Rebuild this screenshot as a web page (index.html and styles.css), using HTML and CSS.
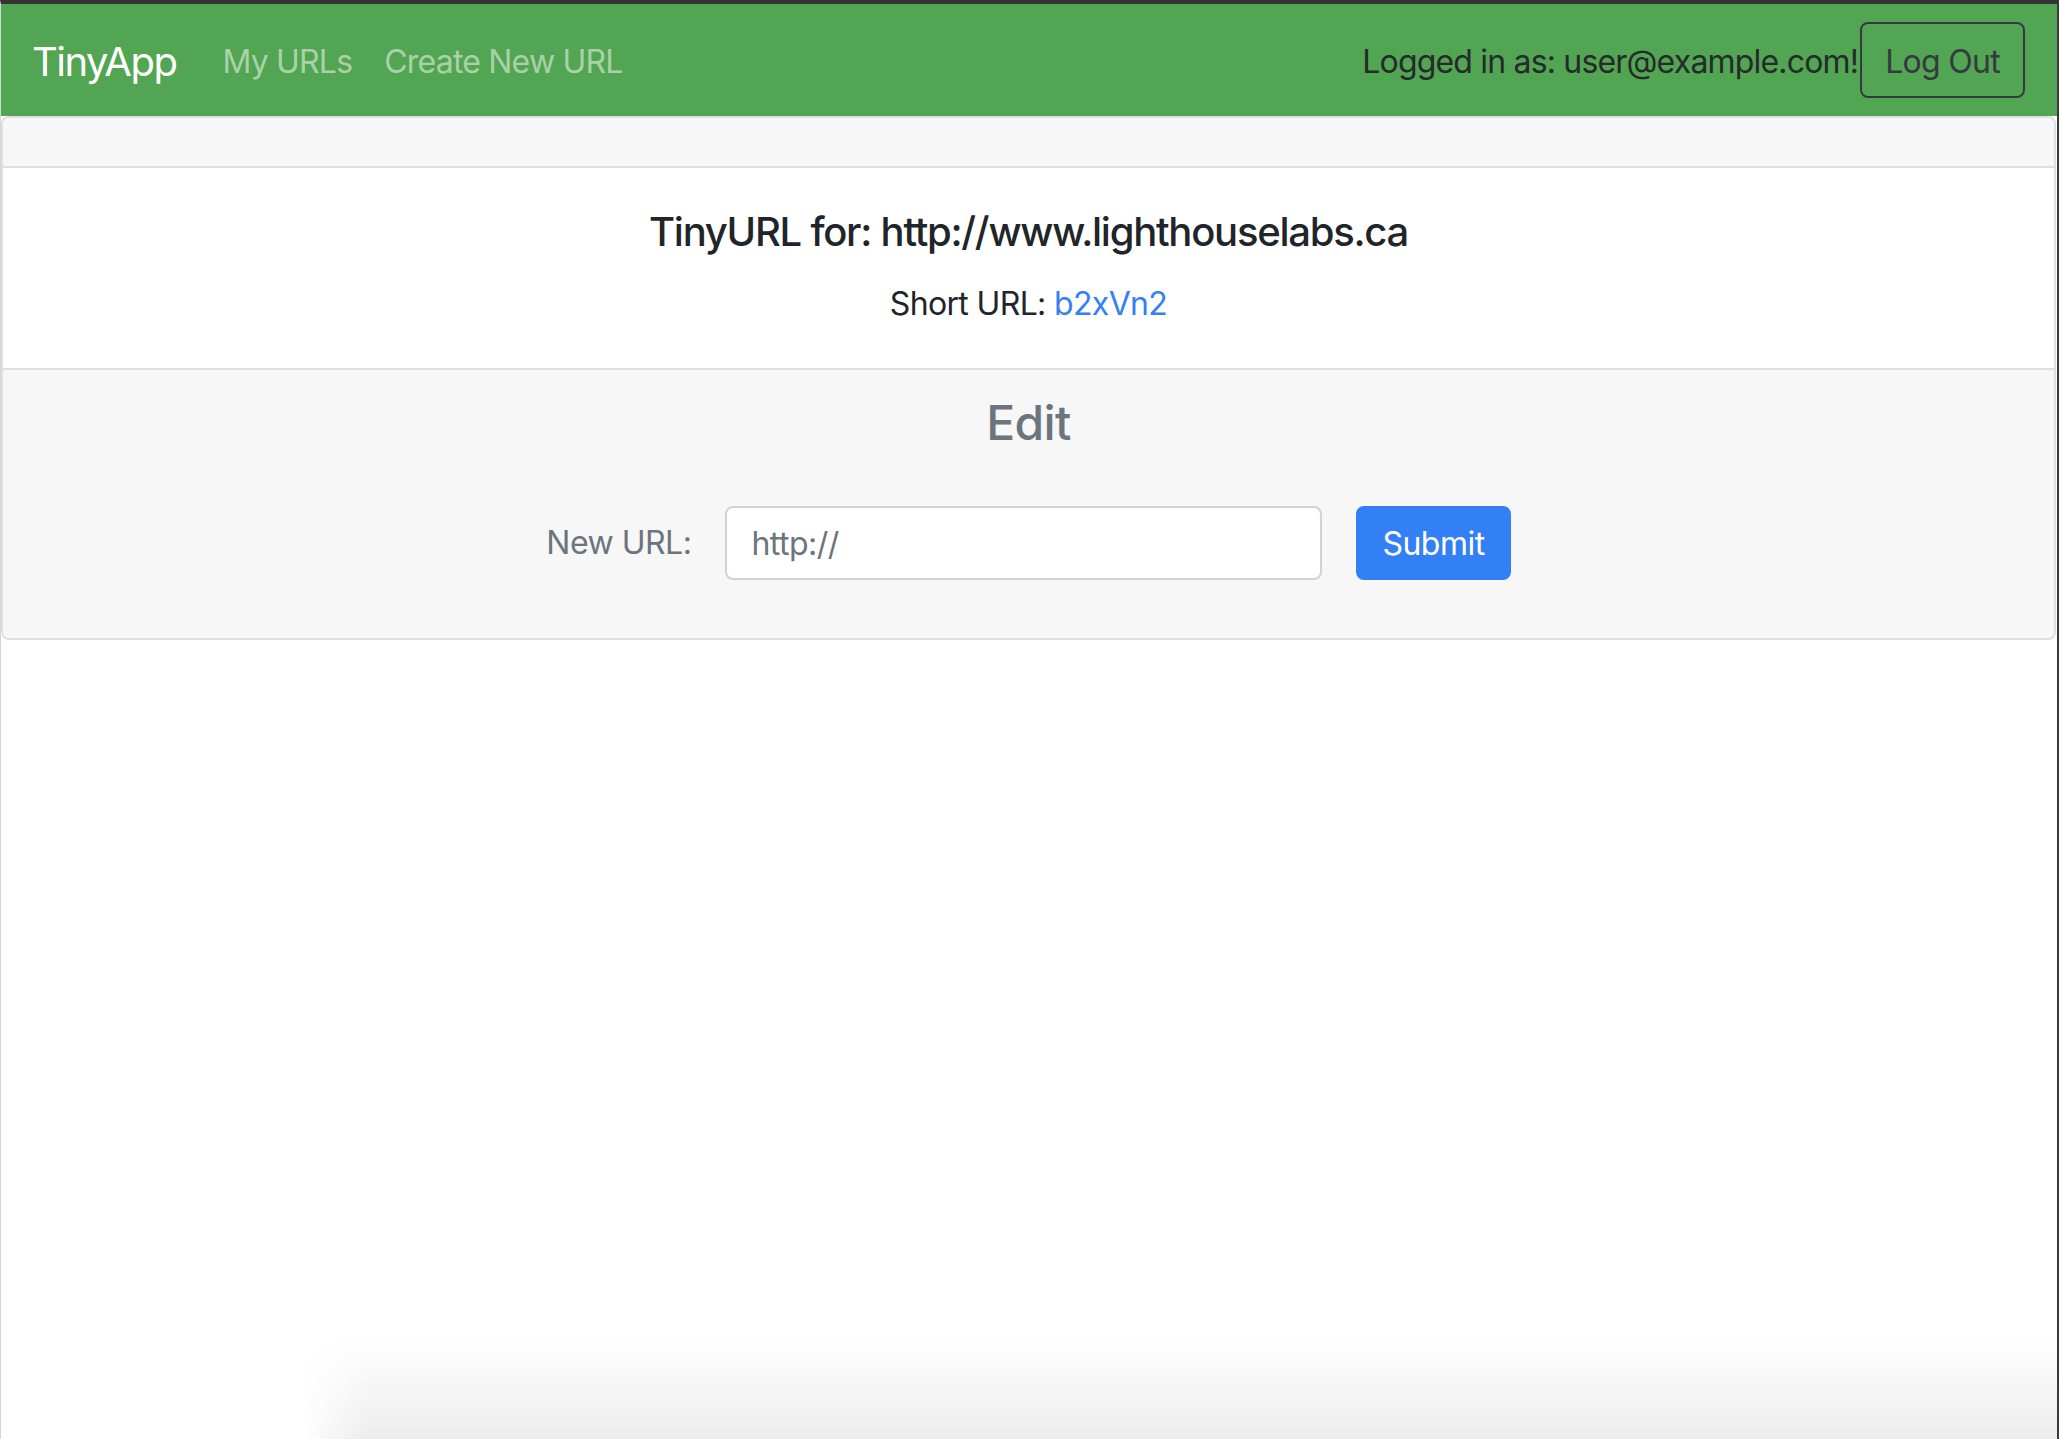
FILE: index.html
```html
<!DOCTYPE html>
<html lang="en">
<head>
<meta charset="utf-8">
<title>TinyApp</title>
<link rel="stylesheet" href="styles.css">
</head>
<body>
<div class="window">
  <nav class="navbar">
    <a class="brand" href="#">TinyApp</a>
    <ul class="nav-links">
      <li><a href="#">My URLs</a></li>
      <li><a href="#">Create New URL</a></li>
    </ul>
    <div class="user">
      <span class="user-text">Logged in as: user@example.com!</span>
      <button class="btn-logout" type="button">Log Out</button>
    </div>
  </nav>
  <main class="card">
    <div class="card-header"></div>
    <div class="card-body">
      <h5 class="card-title">TinyURL for: http://www.lighthouselabs.ca</h5>
      <p class="card-text">Short URL: <a class="short-link" href="#">b2xVn2</a></p>
    </div>
    <div class="card-footer">
      <h4 class="edit-title">Edit</h4>
      <form class="edit-form">
        <label class="edit-label" for="newurl">New URL:</label>
        <input class="edit-input" id="newurl" type="text" value="http://">
        <button class="btn-submit" type="button">Submit</button>
      </form>
    </div>
  </main>
  <div class="bottom-shade"></div>
</div>
</body>
</html>
```

FILE: styles.css
```css
* { box-sizing: border-box; }

html, body {
  margin: 0;
  padding: 0;
  background: #ffffff;
}

body {
  font-family: "Inter", "Liberation Sans", Arial, sans-serif;
  font-size: 32px;
  line-height: 1.5;
  color: #212529;
}

.window {
  position: relative;
  min-height: 100vh;
  border-top: 4px solid #333333;
  border-left: 1px solid #d6d6d6;
  border-right: 2px solid #3a3a3a;
  overflow: hidden;
}

.navbar {
  display: flex;
  align-items: center;
  height: 112px;
  padding: 16px 32px 16px 31px;
  background: #52a552;
}

.brand {
  font-size: 40px;
  line-height: 60px;
  padding: 12px 0 8px;
  margin-right: 30px;
  color: #ffffff;
  text-decoration: none;
  letter-spacing: -1.5px;
}

.nav-links {
  display: flex;
  list-style: none;
  margin: 0;
  padding: 0;
}

.nav-links a {
  display: block;
  padding: 18px 16px 14px;
  line-height: 48px;
  color: #a9d2a9;
  text-decoration: none;
  letter-spacing: -0.8px;
}

.user {
  margin-left: auto;
  display: flex;
  align-items: center;
}

.user-text {
  color: #262a2c;
  letter-spacing: -0.82px;
  padding-top: 3px;
}

.btn-logout {
  font: inherit;
  letter-spacing: -0.7px;
  color: #343a40;
  background: transparent;
  border: 2px solid #343a40;
  border-radius: 8px;
  padding: 13px 23px 9px;
  line-height: 48px;
  height: 76px;
  margin-left: 2px;
}

.card {
  display: flex;
  flex-direction: column;
  border: 2px solid #dfdfdf;
  border-radius: 8px;
  background: #ffffff;
  margin-right: 1px;
}

.card-header {
  height: 50px;
  background: #f7f7f7;
  border-bottom: 2px solid #dfdfdf;
  border-radius: 6px 6px 0 0;
}

.card-body {
  padding: 40px;
  text-align: center;
}

.card-title {
  margin: 0 0 24px;
  font-size: 40px;
  line-height: 48px;
  font-weight: 500;
  color: #212529;
  letter-spacing: -1.26px;
}

.card-text {
  margin: 0;
  line-height: 48px;
  letter-spacing: -0.65px;
}

.short-link {
  color: #3381f5;
  text-decoration: none;
}

.card-footer {
  background: #f7f7f7;
  border-top: 2px solid #dfdfdf;
  border-radius: 0 0 6px 6px;
  padding: 24px 40px 26px;
  text-align: center;
}

.edit-title {
  margin: 0 0 55px;
  font-size: 48px;
  line-height: 57px;
  font-weight: 500;
  color: #6c757d;
  letter-spacing: -0.6px;
}

.edit-form {
  display: flex;
  justify-content: center;
  align-items: center;
  margin-bottom: 32px;
}

.edit-label {
  color: #6c757d;
  margin-right: 34px;
  letter-spacing: -0.5px;
}

.edit-input {
  font: inherit;
  letter-spacing: -0.5px;
  width: 597px;
  height: 74px;
  padding: 12px 24px;
  color: #6c757d;
  background: #ffffff;
  border: 2px solid #cfd3d8;
  border-radius: 8px;
  outline: none;
}

.btn-submit {
  font: inherit;
  letter-spacing: -0.5px;
  margin-left: 34px;
  height: 74px;
  padding: 12px 24px;
  color: #ffffff;
  background: #3380f6;
  border: 2px solid #3380f6;
  border-radius: 8px;
}

.bottom-shade {
  position: absolute;
  left: 300px;
  right: 0;
  bottom: 0;
  height: 100px;
  background: linear-gradient(to bottom, rgba(0,0,0,0), rgba(0,0,0,0.075));
  -webkit-mask-image: linear-gradient(to right, transparent, #000 70px);
  mask-image: linear-gradient(to right, transparent, #000 70px);
  pointer-events: none;
}
```
